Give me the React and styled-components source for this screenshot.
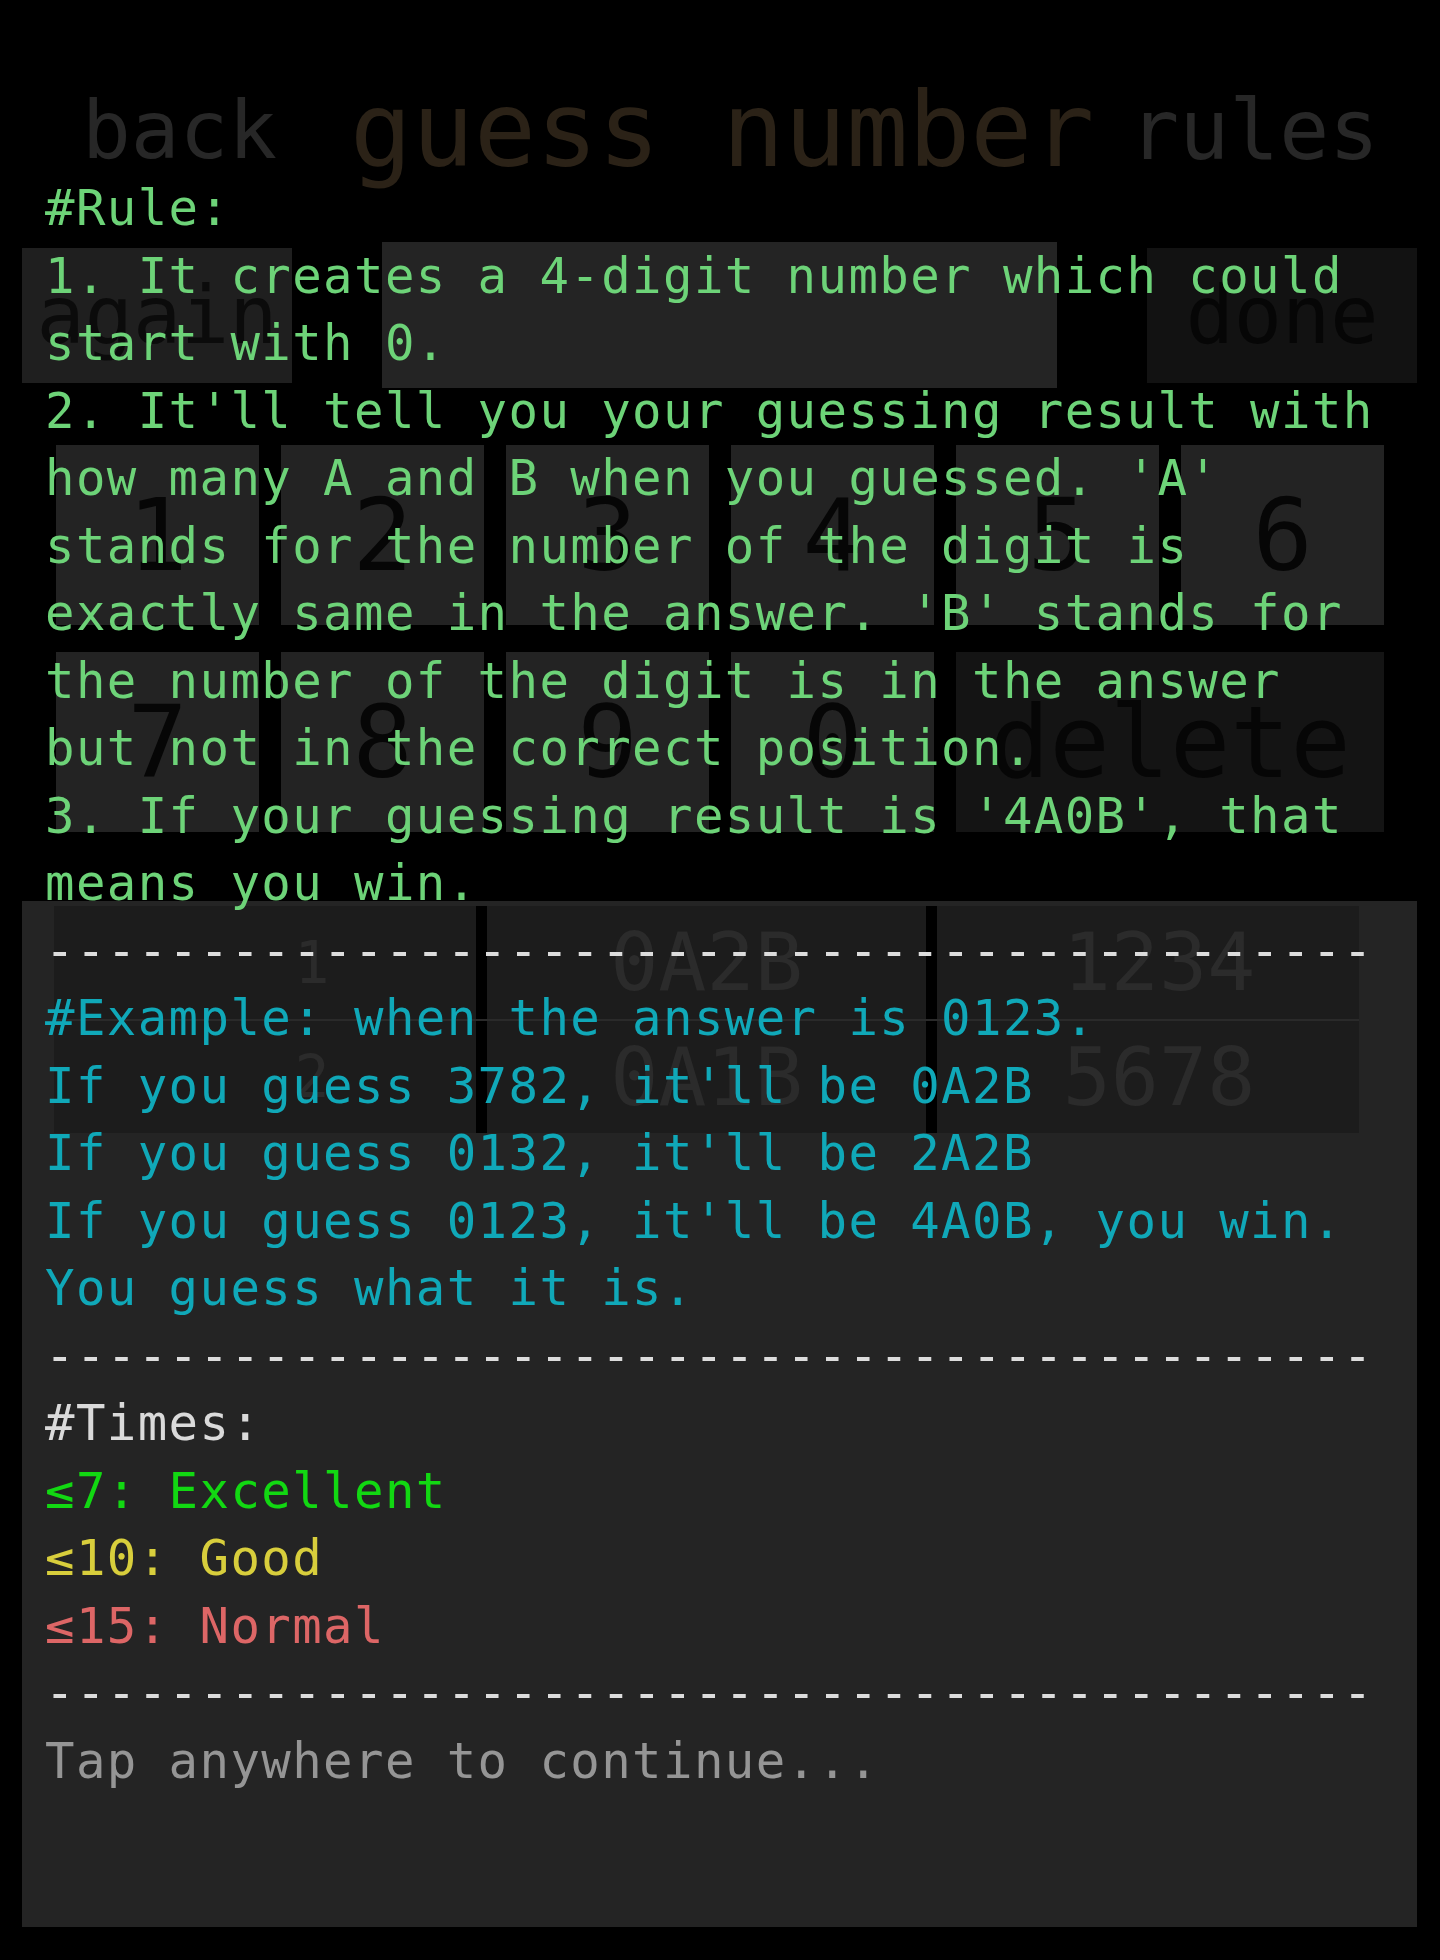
import styled, { createGlobalStyle } from "styled-components";

const GlobalStyle = createGlobalStyle`
  html, body {
    margin: 0;
    padding: 0;
    background: #000;
  }
  body {
    font-family: "DejaVu Sans Mono", "Liberation Mono", monospace;
  }
`;

const Page = styled.div`
  position: relative;
  width: 1440px;
  height: 1960px;
  background: #000;
  overflow: hidden;
`;

const Header = styled.header`
  box-sizing: border-box;
  height: 242px;
  padding-top: 18px;
  display: flex;
  align-items: center;
`;

const HeaderText = styled.span`
  margin-left: ${(p) => p.$ml}px;
  font-size: ${(p) => p.$size}px;
  color: ${(p) => p.$color};
  line-height: normal;
`;

const TopRow = styled.div`
  display: flex;
  align-items: center;
  gap: 90px;
  height: 146px;
  padding: 0 23px 0 22px;
`;

const SideButton = styled.div`
  width: 270px;
  height: 135px;
  background: ${(p) => p.$bg};
  color: ${(p) => p.$color};
  display: flex;
  align-items: center;
  justify-content: center;
  font-size: 80px;
`;

const Display = styled.div`
  flex: 1;
  height: 146px;
  background: #242424;
`;

const Keypad = styled.div`
  margin-top: 57px;
  padding-left: 56px;
  display: grid;
  grid-template-columns: repeat(6, 203px);
  grid-auto-rows: 180px;
  column-gap: 22px;
  row-gap: 27px;
`;

const Key = styled.div`
  grid-column: span ${(p) => p.$span || 1};
  background: ${(p) => (p.$dark ? "#141414" : "#232323")};
  color: #060606;
  display: flex;
  align-items: center;
  justify-content: center;
  font-size: 100px;
`;

const HistoryPanel = styled.section`
  box-sizing: border-box;
  margin: 69px 23px 0 22px;
  height: 1026px;
  padding: 5px 58px 0 32px;
  background: #242424;
`;

const HistoryRow = styled.div`
  box-sizing: border-box;
  display: grid;
  grid-template-columns: 422px 439px 422px;
  column-gap: 11px;
  height: ${(p) => p.$h}px;
  background: #000;
  border-top: ${(p) => (p.$first ? "none" : "2px solid #2a2a2a")};
`;

const HistoryCell = styled.div`
  background: #1c1c1c;
  color: #2b2b2b;
  display: flex;
  align-items: center;
  justify-content: center;
  padding-left: ${(p) => p.$pl || 0}px;
  font-size: ${(p) => p.$size}px;
`;

const RulesOverlay = styled.div`
  position: absolute;
  inset: 0;
  box-sizing: border-box;
  padding: 175px 0 0 45px;
  cursor: pointer;
`;

const RulesText = styled.div`
  width: 1340px;
  font-family: "DejaVu Sans Mono", monospace;
  font-size: 49px;
  letter-spacing: 1.4px;
  line-height: 67.5px;
`;

const Line = styled.div`
  color: ${(p) => p.$color};
`;

const GREEN = "#6dd378";
const CYAN = "#10a8b8";
const DASH = "#dcdcdc";
const dashes = "-".repeat(43);

const keys = ["1", "2", "3", "4", "5", "6", "7", "8", "9", "0"];

const history = [
  { n: "1", result: "0A2B", guess: "1234" },
  { n: "2", result: "0A1B", guess: "5678" },
];

export default function App() {
  return (
    <Page>
      <GlobalStyle />
      <Header>
        <HeaderText $ml={82} $size={81} $color="#272727">back</HeaderText>
        <HeaderText $ml={73} $size={103} $color="#2b2217">guess number</HeaderText>
        <HeaderText $ml={35} $size={83} $color="#272727">rules</HeaderText>
      </Header>

      <TopRow>
        <SideButton $bg="#1f1f1f" $color="#0b0b0b">again</SideButton>
        <Display />
        <SideButton $bg="#121212" $color="#060606">done</SideButton>
      </TopRow>

      <Keypad>
        {keys.map((k) => (
          <Key key={k}>{k}</Key>
        ))}
        <Key $span={2} $dark>delete</Key>
      </Keypad>

      <HistoryPanel>
        {history.map((h, i) => (
          <HistoryRow key={h.n} $first={i === 0} $h={i === 0 ? 113 : 114}>
            <HistoryCell $size={58} $pl={94}>{h.n}</HistoryCell>
            <HistoryCell $size={80}>{h.result}</HistoryCell>
            <HistoryCell $size={80} $pl={22}>{h.guess}</HistoryCell>
          </HistoryRow>
        ))}
      </HistoryPanel>

      <RulesOverlay>
        <RulesText>
          <Line $color={GREEN}>#Rule:</Line>
          <Line $color={GREEN}>1. It creates a 4-digit number which could start with 0.</Line>
          <Line $color={GREEN}>
            2. It'll tell you your guessing result with how many A and B when you guessed. 'A'
            stands for the number of the digit is exactly same in the answer. 'B' stands for the
            number of the digit is in the answer but not in the correct position.
          </Line>
          <Line $color={GREEN}>3. If your guessing result is '4A0B', that means you win.</Line>
          <Line $color={DASH}>{dashes}</Line>
          <Line $color={CYAN}>#Example: when the answer is 0123.</Line>
          <Line $color={CYAN}>If you guess 3782, it'll be 0A2B</Line>
          <Line $color={CYAN}>If you guess 0132, it'll be 2A2B</Line>
          <Line $color={CYAN}>If you guess 0123, it'll be 4A0B, you win.</Line>
          <Line $color={CYAN}>You guess what it is.</Line>
          <Line $color={DASH}>{dashes}</Line>
          <Line $color="#dadada">#Times:</Line>
          <Line $color="#12d812">≤7: Excellent</Line>
          <Line $color="#d8ce3c">≤10: Good</Line>
          <Line $color="#dd6666">≤15: Normal</Line>
          <Line $color={DASH}>{dashes}</Line>
          <Line $color="#959595">Tap anywhere to continue...</Line>
        </RulesText>
      </RulesOverlay>
    </Page>
  );
}
